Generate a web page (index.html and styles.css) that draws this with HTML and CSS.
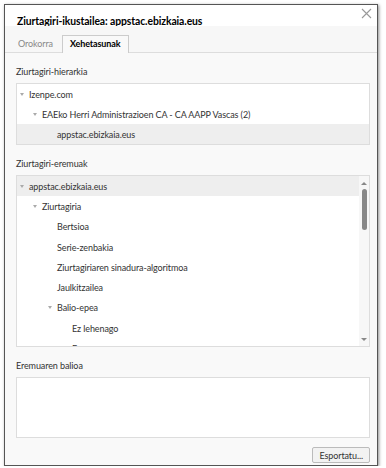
FILE: index.html
```html
<!DOCTYPE html>
<html lang="eu">
<head>
    <meta charset="UTF-8">
    <title>Ziurtagiri-ikustailea</title>
    <link rel="stylesheet" href="styles.css">
</head>
<body>

    <div class="dialog">
        <div class="titlebar">
            <span class="title">Ziurtagiri-ikustailea: appstac.ebizkaia.eus</span>
            <svg class="close" width="11" height="11" viewBox="0 0 11 11">
                <path d="M1 1 L10 10 M10 1 L1 10" stroke="#999" stroke-width="1.1" fill="none"/>
            </svg>
        </div>

        <div class="tabs">
            <div class="tab">Orokorra</div>
            <div class="tab active">Xehetasunak</div>
        </div>

        <div class="content">
            <div class="label">Ziurtagiri-hierarkia</div>
            <div class="tree hierarchy">
                <div class="row lvl0"><span class="twisty"></span>Izenpe.com</div>
                <div class="row lvl1"><span class="twisty"></span>EAEko Herri Administrazioen CA - CA AAPP Vascas (2)</div>
                <div class="row lvl2 selected">appstac.ebizkaia.eus</div>
            </div>

            <div class="label">Ziurtagiri-eremuak</div>
            <div class="tree fields">
                <div class="rows">
                    <div class="row lvl0 selected"><span class="twisty"></span>appstac.ebizkaia.eus</div>
                    <div class="row lvl1"><span class="twisty"></span>Ziurtagiria</div>
                    <div class="row lvl2">Bertsioa</div>
                    <div class="row lvl2">Serie-zenbakia</div>
                    <div class="row lvl2">Ziurtagiriaren sinadura-algoritmoa</div>
                    <div class="row lvl2">Jaulkitzailea</div>
                    <div class="row lvl2 sub"><span class="twisty"></span>Balio-epea</div>
                    <div class="row lvl3">Ez lehenago</div>
                    <div class="row lvl3">Ez geroago</div>
                </div>
                <div class="scrollbar">
                    <span class="arrow up"></span>
                    <span class="thumb"></span>
                    <span class="arrow down"></span>
                </div>
            </div>

            <div class="label">Eremuaren balioa</div>
            <div class="valuebox"></div>

            <div class="actions">
                <button type="button">Esportatu...</button>
            </div>
        </div>
    </div>

</body>
</html>
```

FILE: styles.css
```css
body {
    margin: 0;
    background-color: #fff;
    font-family: Lato, "Open Sans", sans-serif;
    font-size: 9px;
    letter-spacing: -0.1px;
    color: #222;
}
.dialog {
    margin: 4px 0 0 4px;
    width: 374px;
    height: 462px;
    border: 1px solid #555;
    box-shadow: 1px 1px 3px rgba(0, 0, 0, 0.45);
    background-color: #f9f9f9;
    display: flex;
    flex-direction: column;
    box-sizing: border-box;
}
.titlebar {
    height: 21px;
    background-color: #fff;
    display: flex;
    align-items: flex-end;
    justify-content: space-between;
    padding: 0 5px 0 12px;
}
.title {
    font-weight: bold;
    font-size: 10.4px;
    color: #000;
    line-height: 14px;
    margin-bottom: -2px;
}
.close {
    align-self: flex-start;
    margin-top: 3px;
}
.tabs {
    display: flex;
    padding: 9px 0 0 5px;
    border-bottom: 1px solid #ddd;
    background-color: #f7f7f7;
}
.tab {
    padding: 0 7px;
    height: 16px;
    line-height: 16px;
    color: #888;
    border: 1px solid transparent;
    border-bottom: none;
}
.tab.active {
    color: #000;
    font-weight: bold;
    background-color: #f9f9f9;
    border-color: #ccc;
    margin-bottom: -1px;
    height: 17px;
    margin-left: 1px;
}
.content {
    flex: 1;
    padding: 12px 7px 0 11px;
    display: flex;
    flex-direction: column;
}
.label {
    color: #333;
    height: 14px;
    line-height: 14px;
    margin-bottom: 4px;
}
.tree {
    background-color: #fff;
    border: 1px solid #ddd;
    margin-bottom: 12px;
}
.row {
    height: 20px;
    white-space: nowrap;
    color: #333;
    overflow: hidden;
    display: flex;
    align-items: center;
    flex-shrink: 0;
}
.fields .row {
    height: 20.3px;
}
.row.selected {
    background-color: #eee;
}
.twisty {
    width: 0;
    height: 0;
    border-left: 2.5px solid transparent;
    border-right: 2.5px solid transparent;
    border-top: 3px solid #aaa;
    margin-right: 5px;
}
.lvl0 { padding-left: 3px; }
.lvl1 { padding-left: 16px; }
.lvl2 { padding-left: 40px; }
.lvl2.sub { padding-left: 31px; }
.lvl3 { padding-left: 55px; }
.fields {
    display: flex;
    height: 170px;
    overflow: hidden;
}
.rows {
    flex: 1;
    overflow: hidden;
}
.scrollbar {
    width: 10px;
    background-color: #f7f7f7;
    display: flex;
    flex-direction: column;
    align-items: center;
    padding: 6px 0 5px;
}
.arrow {
    width: 0;
    height: 0;
    border-left: 3px solid transparent;
    border-right: 3px solid transparent;
}
.arrow.up {
    border-bottom: 3px solid #888;
}
.arrow.down {
    border-top: 3px solid #888;
    margin-top: auto;
}
.thumb {
    width: 5px;
    height: 41px;
    margin-top: 4px;
    background-color: #888;
    border-radius: 3px;
}
.valuebox {
    height: 59px;
    background-color: #fff;
    border: 1px solid #ddd;
}
.actions {
    display: flex;
    justify-content: flex-end;
    margin-top: 9px;
}
button {
    font-family: inherit;
    font-size: 9px;
    letter-spacing: -0.1px;
    color: #333;
    height: 16px;
    padding: 0 6px;
    background-color: #f2f2f2;
    border: 1px solid #bbb;
    border-radius: 2px;
}
```
